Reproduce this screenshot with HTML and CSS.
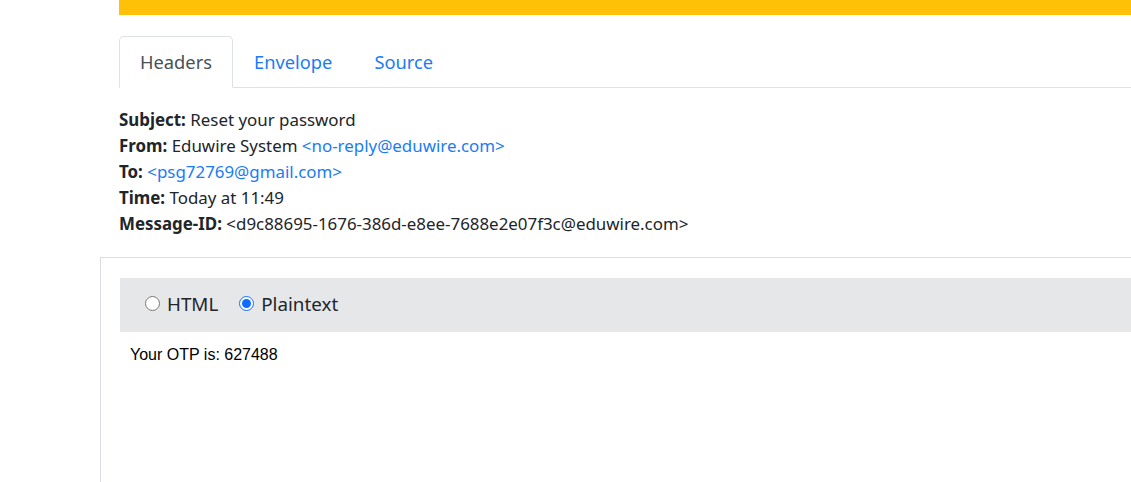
FILE: index.html
```html
<!DOCTYPE html>
<html>
<head>
<meta charset="utf-8">
<link rel="stylesheet" href="styles.css">
</head>
<body>
<div class="top">
  <div class="banner"></div>
  <ul class="tabs">
    <li class="tab active">Headers</li>
    <li class="tab">Envelope</li>
    <li class="tab">Source</li>
  </ul>
  <div class="headers">
    <div><b>Subject:</b> Reset your password</div>
    <div><b>From:</b> Eduwire System <a>&lt;no-reply@eduwire.com&gt;</a></div>
    <div><b>To:</b> <a>&lt;psg72769@gmail.com&gt;</a></div>
    <div><b>Time:</b> Today at 11:49</div>
    <div><b>Message-ID:</b> &lt;d9c88695-1676-386d-e8ee-7688e2e07f3c@eduwire.com&gt;</div>
  </div>
</div>
<div class="message">
  <div class="format">
    <label class="opt"><input type="radio" name="f"> HTML</label>
    <label class="opt"><input type="radio" name="f" checked> Plaintext</label>
  </div>
  <div class="body">Your OTP is: 627488</div>
</div>
</body>
</html>
```
FILE: styles.css
```css
html, body { margin: 0; padding: 0; background: #fff; }
body { font-family: "Noto Sans", "Open Sans", sans-serif; color: #212529; overflow: hidden; height: 482px; }
.top { padding-left: 119px; }
.banner { height: 15px; background: #ffc107; }
.tabs {
  list-style: none; margin: 21px 0 0; padding: 0;
  display: flex; border-bottom: 1px solid #dee2e6;
}
.tab {
  font-size: 18.3px; line-height: 30px; padding: 10px 20px 10px 20px;
  color: #1a7cf5; border: 1px solid transparent; border-radius: 5px 5px 0 0;
  margin-bottom: -1px;
}
.tab.active { color: #495057; border-color: #dee2e6 #dee2e6 #fff; background: #fff; }
.headers { font-size: 16.9px; line-height: 26px; padding-top: 19px; }
.headers b { font-weight: 700; }
.headers a { color: #1a7cf5; }
.message {
  margin: 20px 0 0 100px; border-top: 1px solid #dcdce8; border-left: 1px solid #dcdce8;
  padding: 20px 0 0 19px; height: 210px;
}
.format {
  background: #e6e7e9; height: 54px; display: flex; align-items: center; gap: 21px;
  padding: 0 0 3px 25px; box-sizing: border-box; font-size: 18.8px; color: #212529;
}
.opt { display: flex; align-items: center; gap: 7px; }
.opt input { margin: 0; width: 15px; height: 15px; accent-color: #0d6efd; }
.body { font-family: "Liberation Sans", Arial, sans-serif; font-size: 16px; color: #000; padding: 14px 0 0 10px; }
```
